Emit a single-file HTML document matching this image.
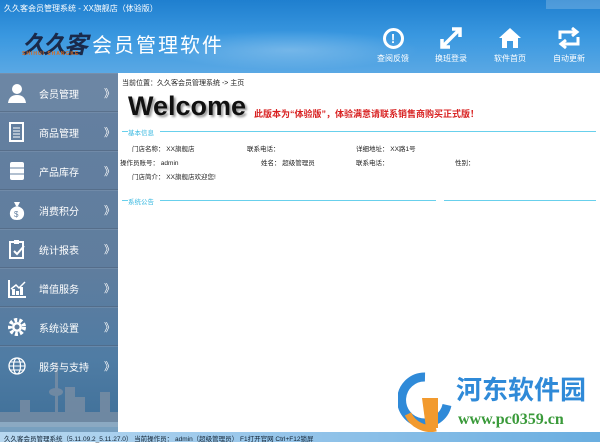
<!DOCTYPE html>
<html><head><meta charset="utf-8"><style>
*{margin:0;padding:0;box-sizing:border-box}
body{width:600px;height:442px;overflow:hidden;position:relative;background:#fff;font-family:"Liberation Sans","Noto Sans CJK SC",sans-serif;font-size:7px;color:#222}
#hdr{position:absolute;left:0;top:0;width:600px;height:73px;background:linear-gradient(180deg,#1f7fcf 0%,#3a98e0 50%,#5aa8e4 100%)}
#hdr .cl{position:absolute;left:160px;top:30px;width:260px;height:40px;background:radial-gradient(ellipse at center,rgba(255,255,255,.25),rgba(255,255,255,0) 70%)}
.tt{position:absolute;left:4px;top:3px;color:#fff;font-size:8px}
.logo{position:absolute;left:22px;top:25px;color:#1a2a4a;font-size:24px;font-style:italic;font-weight:bold;letter-spacing:-3px}
.logo2{position:absolute;left:22px;top:51px;color:#d86a20;font-size:5px;font-weight:bold;letter-spacing:1px}
.title{position:absolute;left:92px;top:29px;color:#fff;font-size:20px;letter-spacing:2px}
.wb{position:absolute;right:0;top:0;width:54px;height:9px;background:rgba(255,255,255,.2)}
.tb{position:absolute;top:26px;width:50px;text-align:center;color:#fff;font-size:8px}
.tb .ic{height:24px;margin:0 auto 3px;display:flex;justify-content:center;align-items:center;font-size:20px;font-weight:bold}
#side{position:absolute;left:0;top:73px;width:118px;height:359px;background:linear-gradient(180deg,#6580a0 0%,#5f7d9e 55%,#4f7ca4 80%,#3e6f98 100%)}
.it{height:39px;border-bottom:1px solid rgba(80,100,125,.6);border-top:1px solid rgba(140,160,185,.35);position:relative;color:#fff;font-size:10px}
.it span{position:absolute;left:39px;top:12px}
.it b{position:absolute;left:104px;top:11px;font-weight:normal;font-size:11px}
.it i{position:absolute;left:8px;top:9px;width:18px;height:20px;font-style:normal}
.sky{position:absolute;left:0;bottom:0;width:118px;height:80px}
#main{position:absolute;left:118px;top:73px;width:482px;height:359px}
.bc{position:absolute;left:4px;top:5px;font-size:7px}
.wel{position:absolute;left:10px;top:18px;font-size:27px;font-weight:bold;color:#111;text-shadow:2px 2px 2px #999}
.note{position:absolute;left:136px;top:34px;color:#d82020;font-size:9px;font-weight:bold}
.sec{position:absolute;left:10px;height:8px;font-size:6.5px;color:#38b8e0}
.ln{position:absolute;height:1px;background:#68d0ec}
.row{position:absolute;font-size:6.5px}
#status{position:absolute;left:0;top:432px;width:600px;height:10px;background:linear-gradient(90deg,#b8d8f0,#8cc0e8 60%,#6aaee0);font-size:6.5px;color:#123;padding:1px 4px;white-space:nowrap}
.wm{position:absolute;left:456px;top:370px;color:#2f8ad8;font-size:26px;font-weight:bold;white-space:nowrap}
.wm2{position:absolute;left:458px;top:411px;color:#3a9a3a;font-size:16px;font-weight:bold;font-family:"Liberation Serif",serif;white-space:nowrap}
</style></head><body>
<div id="hdr"><div class="cl"></div>
<div class="tt">久久客会员管理系统 - XX旗舰店（体验版）</div>
<div class="logo">久久客</div><div class="logo2">SHIHUI SHANGKE</div>
<div class="title">会员管理软件</div>
<div class="wb"></div>
<div class="tb" style="left:368px"><div class="ic"><div style="width:21px;height:21px;border:3px solid #fff;border-radius:50%;font-size:13px;line-height:15px">!</div></div>查阅反馈</div>
<div class="tb" style="left:426px"><div class="ic"><svg width="24" height="24"><path d="M3 21 L21 3 M13 3h8v8 M3 13v8h8" stroke="#fff" stroke-width="3.5" fill="none"/></svg></div>换班登录</div>
<div class="tb" style="left:485px"><div class="ic"><svg width="24" height="24"><path d="M12 2 L23 12 H20 V22 H15 V15 H9 V22 H4 V12 H1Z" fill="#fff"/></svg></div>软件首页</div>
<div class="tb" style="left:544px"><div class="ic"><svg width="24" height="22"><path d="M3 12V5h16 M15 1l5 4-5 4 M21 10v7H5 M9 13l-5 4 5 4" stroke="#fff" stroke-width="3" fill="none"/></svg></div>自动更新</div>
</div>
<div id="side">
<svg class="sky" viewBox="0 0 118 80"><g fill="#7a8ea4" opacity=".8"><rect x="55" y="10" width="3" height="60"/><ellipse cx="56" cy="40" rx="7" ry="4"/><rect x="65" y="35" width="10" height="40"/><rect x="75" y="45" width="10" height="30"/><rect x="20" y="48" width="10" height="27"/><rect x="100" y="40" width="10" height="35"/><rect x="0" y="60" width="118" height="15"/></g><rect x="0" y="70" width="118" height="10" fill="#9fc0d8" opacity=".6"/></svg>
<div class="it" style="background:rgba(255,255,255,.05)"><i><svg width="18" height="20"><circle cx="9" cy="6" r="5" fill="#fff"/><path d="M0 20 Q1 12 9 12 Q17 12 18 20Z" fill="#fff"/></svg></i><span>会员管理</span><b>》</b></div>
<div class="it"><i><svg width="18" height="20"><rect x="2" y="1" width="13" height="18" fill="none" stroke="#fff" stroke-width="2"/><path d="M5 6h7M5 9h7M5 12h7M5 15h7" stroke="#fff"/></svg></i><span>商品管理</span><b>》</b></div>
<div class="it"><i><svg width="18" height="20"><rect x="2" y="1" width="14" height="18" rx="2" fill="#fff"/><path d="M2 7h14M2 13h14" stroke="#6580a0"/></svg></i><span>产品库存</span><b>》</b></div>
<div class="it"><i><svg width="18" height="20"><path d="M6 2h6l-2 4h-2z M9 6 Q17 8 16 15 Q15 20 9 20 Q3 20 2 15 Q1 8 9 6Z" fill="#fff"/><text x="6" y="17" font-size="8" fill="#6580a0" font-family="Liberation Sans">$</text></svg></i><span>消费积分</span><b>》</b></div>
<div class="it"><i><svg width="18" height="20"><rect x="2" y="3" width="13" height="16" fill="none" stroke="#fff" stroke-width="2"/><rect x="6" y="1" width="5" height="4" fill="#fff"/><path d="M6 12l3 3 7-8" stroke="#fff" stroke-width="2" fill="none"/></svg></i><span>统计报表</span><b>》</b></div>
<div class="it"><i><svg width="18" height="20"><path d="M1 2v17h17" stroke="#fff" stroke-width="2" fill="none"/><path d="M4 17v-6h3v6M8 17v-4h3v4M12 17v-8h3v8" fill="#fff"/><path d="M3 11l5-4 3 3 6-6" stroke="#fff" stroke-width="1.5" fill="none"/></svg></i><span>增值服务</span><b>》</b></div>
<div class="it"><i><svg width="18" height="20"><circle cx="9" cy="10" r="7" fill="none" stroke="#fff" stroke-width="4" stroke-dasharray="3 2"/><circle cx="9" cy="10" r="5" fill="#fff"/><circle cx="9" cy="10" r="2.5" fill="#5f7d9e"/></svg></i><span>系统设置</span><b>》</b></div>
<div class="it" style="border-bottom:none"><i><svg width="18" height="20"><circle cx="9" cy="10" r="8" fill="none" stroke="#fff" stroke-width="1.3"/><ellipse cx="9" cy="10" rx="3.5" ry="8" fill="none" stroke="#fff" stroke-width="1.2"/><path d="M1 10h16M2 6h14M2 14h14" stroke="#fff" stroke-width="1.1"/></svg></i><span>服务与支持</span><b>》</b></div>
</div>
<div id="main">
<div class="bc">当前位置：久久客会员管理系统 -&gt; 主页</div>
<div class="wel">Welcome</div>
<div class="note">此版本为“体验版”，体验满意请联系销售商购买正式版！</div>
<div class="ln" style="left:4px;top:58px;width:6px"></div><div class="sec" style="top:54px">基本信息</div><div class="ln" style="left:42px;top:58px;width:436px"></div>
<div class="row" style="left:14px;top:70px">门店名称： XX旗舰店</div>
<div class="row" style="left:129px;top:70px">联系电话：</div>
<div class="row" style="left:238px;top:70px">详细地址： XX路1号</div>
<div class="row" style="left:2px;top:84px">操作员账号： admin</div>
<div class="row" style="left:143px;top:84px">姓名： 超级管理员</div>
<div class="row" style="left:238px;top:84px">联系电话：</div>
<div class="row" style="left:337px;top:84px">性别：</div>
<div class="row" style="left:14px;top:98px">门店简介： XX旗舰店欢迎您!</div>
<div class="ln" style="left:4px;top:127px;width:6px"></div><div class="sec" style="top:123px">系统公告</div><div class="ln" style="left:42px;top:127px;width:276px"></div><div class="ln" style="left:326px;top:127px;width:152px"></div>
</div>
<svg style="position:absolute;left:398px;top:372px" width="54" height="60"><path d="M27 5a23 23 0 1 0 22 28" stroke="#2f8ad8" stroke-width="9" fill="none"/><path d="M24 26h16v30H28z" fill="#f29a2e"/><path d="M10 42a25 25 0 0 0 28 14" stroke="#f29a2e" stroke-width="7" fill="none"/></svg>
<div class="wm">河东软件园</div>
<div class="wm2">www.pc0359.cn</div>
<div id="status">久久客会员管理系统（5.11.09.2_5.11.27.0） 当前操作员： admin（超级管理员） F1打开官网 Ctrl+F12锁屏</div>
</body></html>
